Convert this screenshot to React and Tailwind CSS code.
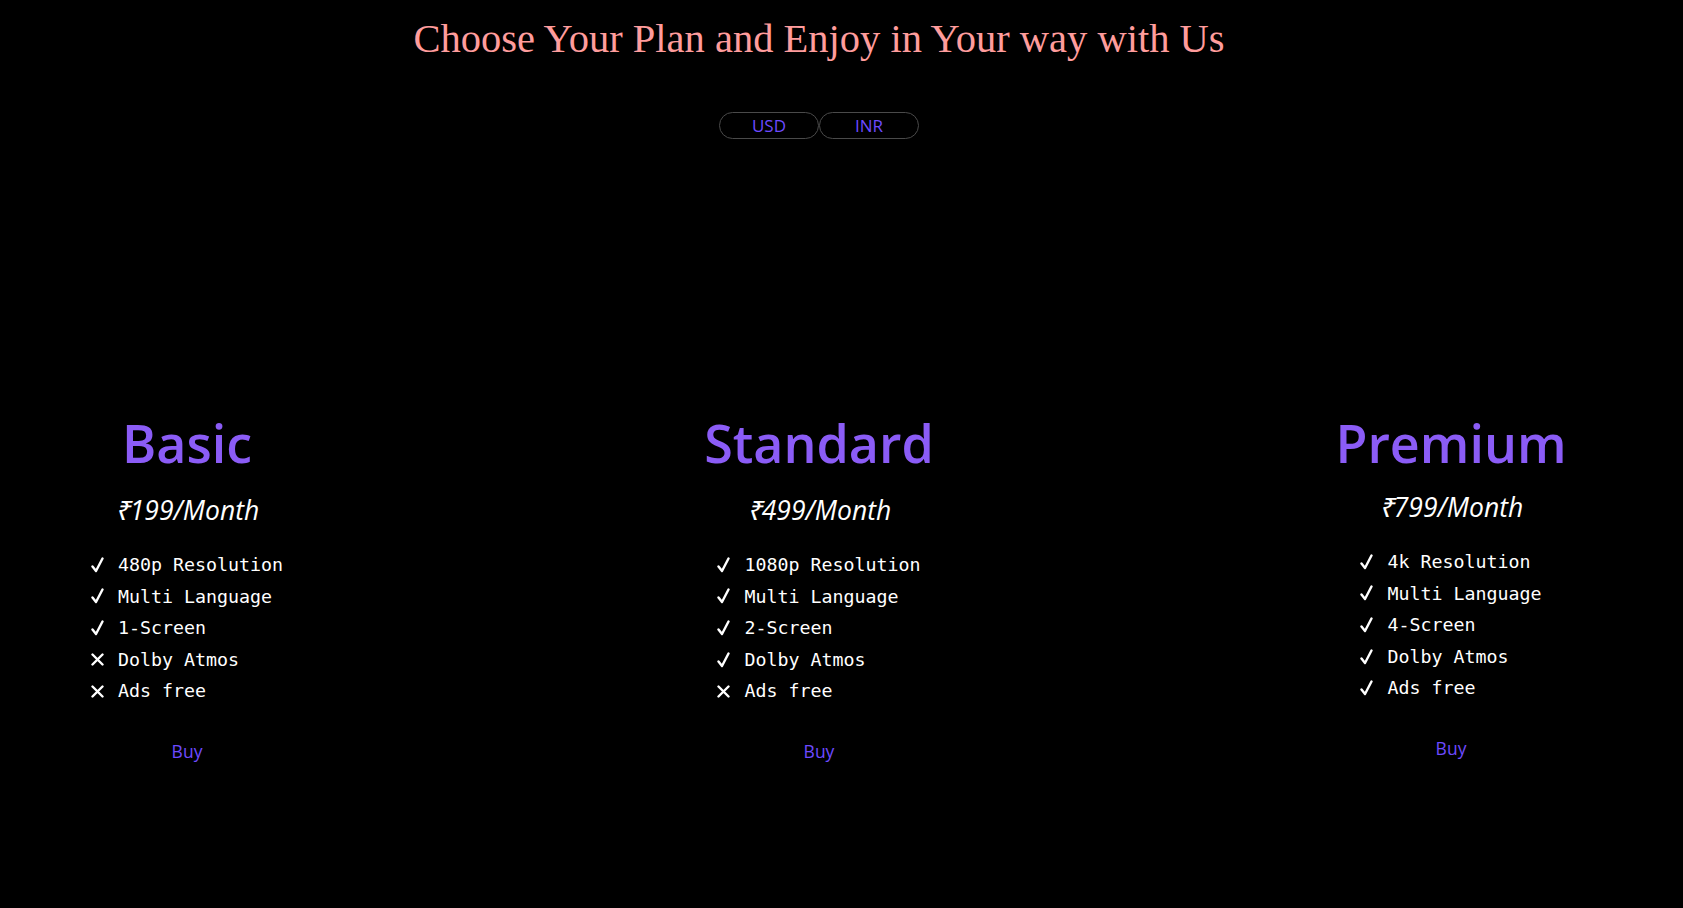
import React from "react";

const plans = [
  {
    name: "Basic",
    price: "₹199/Month",
    features: [
      [true, "480p Resolution"],
      [true, "Multi Language"],
      [true, "1-Screen"],
      [false, "Dolby Atmos"],
      [false, "Ads free"],
    ],
    shift: false,
  },
  {
    name: "Standard",
    price: "₹499/Month",
    features: [
      [true, "1080p Resolution"],
      [true, "Multi Language"],
      [true, "2-Screen"],
      [true, "Dolby Atmos"],
      [false, "Ads free"],
    ],
    shift: false,
  },
  {
    name: "Premium",
    price: "₹799/Month",
    features: [
      [true, "4k Resolution"],
      [true, "Multi Language"],
      [true, "4-Screen"],
      [true, "Dolby Atmos"],
      [true, "Ads free"],
    ],
    shift: true,
  },
];

function Mark({ ok }) {
  return (
    <span className="flex w-[27px] items-center">
      {ok ? (
        <svg width="13" height="16" viewBox="0 0 13 16" fill="none">
          <path d="M1.5 9.5 L5 14 L11.5 1.5" stroke="white" strokeWidth="2.4" strokeLinecap="round" strokeLinejoin="round" />
        </svg>
      ) : (
        <svg width="13" height="13" viewBox="0 0 13 13" fill="none">
          <path d="M1.5 1.5 L11.5 11.5 M11.5 1.5 L1.5 11.5" stroke="white" strokeWidth="2.4" strokeLinecap="round" />
        </svg>
      )}
    </span>
  );
}

function Plan({ plan }) {
  return (
    <div className="flex w-[374px] flex-col items-center">
      <h2 className="text-[52px] font-semibold leading-[84px] text-[#8b5cf6] [font-family:'Open_Sans',sans-serif]">
        {plan.name}
      </h2>
      <div className={plan.shift ? "-mt-[3px] flex flex-col items-center" : "flex flex-col items-center"}>
        <p className="mt-[7px] text-[26.5px] italic leading-[36px] text-white [font-family:'Open_Sans',sans-serif]">
          {plan.price}
        </p>
        <ul className="mt-[21px] flex flex-col text-[18.3px] leading-[31.6px] text-white [font-family:'DejaVu_Sans_Mono',monospace]">
          {plan.features.map(([ok, text]) => (
            <li key={text} className="flex items-center">
              <Mark ok={ok} />
              <span>{text}</span>
            </li>
          ))}
        </ul>
        <button className="mt-[30px] text-[17.5px] leading-[28px] text-[#6d4aff] [font-family:'Open_Sans',sans-serif]">
          Buy
        </button>
      </div>
    </div>
  );
}

export default function App() {
  return (
    <div className="min-h-[908px] w-full bg-black">
      <div className="flex w-[1638px] flex-col items-center">
        <h1 className="mt-[14px] text-[40.5px] leading-[50px] text-[#ff9c9c] [font-family:'Liberation_Serif',serif]">
          Choose Your Plan and Enjoy in Your way with Us
        </h1>
        <div className="mt-[48px] flex">
          <button className="h-[27px] w-[100px] rounded-full border border-[#4a4a4a] text-[17px] leading-none text-[#6d4aff] [font-family:'Open_Sans',sans-serif]">
            USD
          </button>
          <button className="h-[27px] w-[100px] rounded-full border border-[#4a4a4a] text-[17px] leading-none text-[#6d4aff] [font-family:'Open_Sans',sans-serif]">
            INR
          </button>
        </div>
        <div className="mt-[262px] flex w-full justify-between">
          {plans.map((p) => (
            <Plan key={p.name} plan={p} />
          ))}
        </div>
      </div>
    </div>
  );
}
